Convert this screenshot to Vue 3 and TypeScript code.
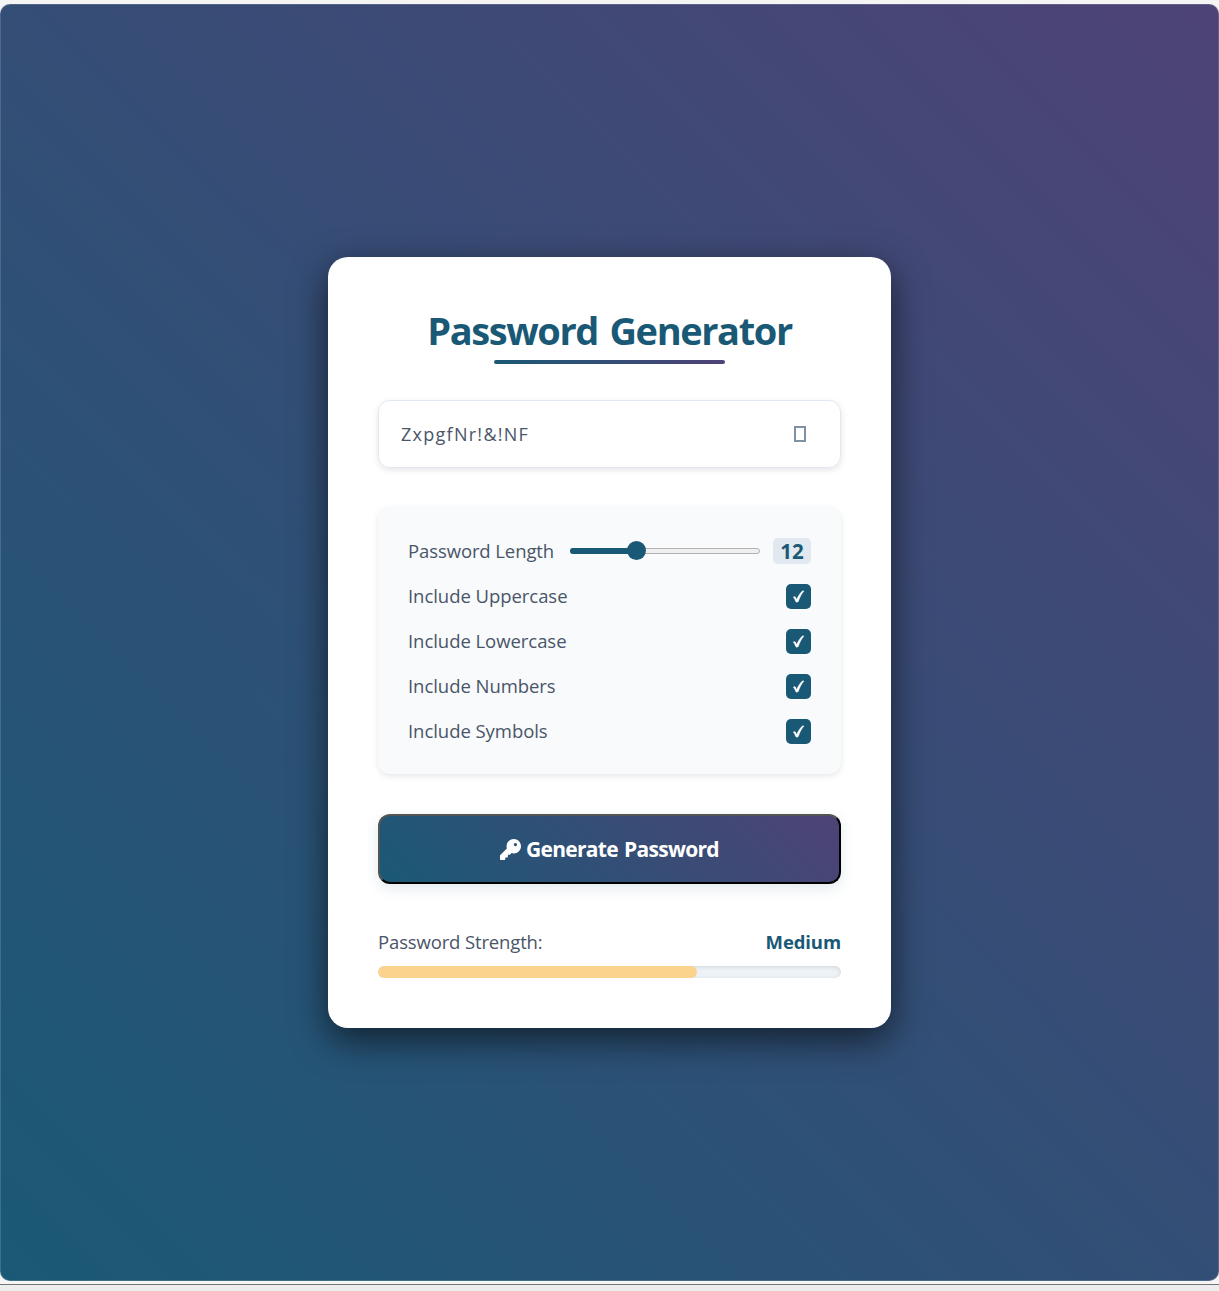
<script setup lang="ts">
import { computed, ref } from 'vue'

interface Option {
  label: string
  checked: boolean
}

const password = ref('ZxpgfNr!&!NF')
const length = ref(12)
const options = ref<Option[]>([
  { label: 'Include Uppercase', checked: true },
  { label: 'Include Lowercase', checked: true },
  { label: 'Include Numbers', checked: true },
  { label: 'Include Symbols', checked: true },
])
const strength = ref({ label: 'Medium', percent: 69 })

const MIN = 4
const MAX = 28
const sliderPercent = computed(() => 1.4 + ((length.value - MIN) / (MAX - MIN)) * 100)
</script>

<template>
  <div class="page">
    <main class="stage">
      <section class="card">
        <h1 class="title"><span>Password Generator</span></h1>
        <div class="rule"></div>

        <div class="output">
          <span class="password">{{ password }}</span>
          <button class="copy" aria-label="Copy password"><i class="tofu"></i></button>
        </div>

        <div class="settings">
          <div class="row">
            <span class="label length-label">Password Length</span>
            <div class="slider" role="slider" :aria-valuenow="length">
              <div class="fill" :style="{ width: sliderPercent + '%' }"></div>
              <div class="thumb" :style="{ left: sliderPercent + '%' }"></div>
            </div>
            <span class="count">{{ length }}</span>
          </div>
          <div v-for="option in options" :key="option.label" class="row">
            <span class="label">{{ option.label }}</span>
            <button class="check" @click="option.checked = !option.checked">
              <svg v-if="option.checked" width="25" height="25" viewBox="0 0 25 25">
                <path
                  d="M7.1 13.2C8.1 12.2 9.4 12.5 9.8 13.6L10.6 15.6C12.1 12 14 9 16.3 7C17 6.7 17.7 6.8 18 7C15.6 9.9 13.8 13.4 12.4 17.4C11.7 18.3 10.4 18.5 9.8 17.7C9 16 8.5 14 7.1 13.2Z"
                  fill="#fff"
                  stroke="#fff"
                  stroke-width="0.3"
                />
              </svg>
            </button>
          </div>
        </div>

        <button class="generate">
          <svg width="21" height="21" viewBox="0 0 512 512">
            <path
              fill="#fff"
              d="M336 352c97.200 0 176-78.800 176-176S433.200 0 336 0S160 78.800 160 176c0 18.700 2.900 36.800 8.300 53.700L7 391c-4.500 4.500-7 10.600-7 17v80c0 13.300 10.700 24 24 24h80c13.300 0 24-10.700 24-24v-40h40c13.300 0 24-10.700 24-24v-40h40c6.400 0 12.500-2.500 17-7l33.300-33.300c16.900 5.400 35 8.300 53.700 8.300zM376 96a40 40 0 1 1 0 80a40 40 0 1 1 0-80z"
            />
          </svg>
          <span>Generate Password</span>
        </button>

        <div class="strength">
          <span class="label strength-label">Password Strength:</span>
          <strong>{{ strength.label }}</strong>
        </div>
        <div class="meter">
          <div class="meter-fill" :style="{ width: strength.percent + '%' }"></div>
        </div>
      </section>
    </main>
    <footer class="edge"></footer>
  </div>
</template>

<style>
body {
  background: #f4f4f4;
}
</style>

<style scoped>
* {
  box-sizing: border-box;
}

.page {
  height: 1291px;
  padding-top: 4px;
  display: flex;
  flex-direction: column;
  background: #f5f5f5;
  font-family: 'Open Sans', 'Noto Sans', sans-serif;
  color: #4a5568;
}

.stage {
  height: 1277px;
  flex: none;
  display: flex;
  justify-content: center;
  align-items: flex-start;
  padding-top: 253px;
  border-radius: 10px;
  background: linear-gradient(45deg, #1a5976, #4e4376);
  box-shadow: inset 0 0 0 1px rgba(255, 255, 255, 0.14);
}

.edge {
  height: 7px;
  margin-top: 3px;
  border-top: 1px solid #757575;
  background: #ededed;
}

.card {
  width: 563px;
  height: 771px;
  padding: 50px;
  display: flex;
  flex-direction: column;
  border-radius: 20px;
  background: #fff;
  box-shadow: 0 12px 36px rgba(0, 0, 0, 0.6);
}

.title {
  margin: 0;
  height: 48px;
  line-height: 47px;
  text-align: center;
  white-space: nowrap;
  font-size: 38px;
  font-weight: 700;
  letter-spacing: -1.4px;
  word-spacing: 3px;
  color: #1a5976;
}

.rule {
  width: 231px;
  height: 4px;
  margin: 5px auto 0;
  border-radius: 2px;
  background: linear-gradient(45deg, #1a5976, #4e4376);
}

.output {
  height: 68px;
  margin-top: 36px;
  padding: 0 34px 0 22px;
  display: flex;
  align-items: center;
  justify-content: space-between;
  border: 1px solid #e2e8f0;
  border-radius: 12px;
  box-shadow: 0 2px 6px rgba(0, 0, 0, 0.11);
}

.password {
  font-size: 18px;
  letter-spacing: 1.27px;
}

button {
  padding: 0;
  border: 0;
  background: none;
  font-family: inherit;
}

.copy {
  display: flex;
}

.tofu {
  width: 12px;
  height: 16px;
  border: 2px solid #8290a6;
}

.settings {
  height: 267px;
  margin-top: 39px;
  padding: 21px 30px;
  border-radius: 12px;
  background: #f8fafc;
  box-shadow: 0 2px 6px rgba(0, 0, 0, 0.1);
}

.row {
  height: 45px;
  display: flex;
  align-items: center;
  justify-content: space-between;
}

.label {
  font-size: 18.5px;
  letter-spacing: -0.05px;
  white-space: nowrap;
}

.length-label {
  width: 146px;
  letter-spacing: -0.1px;
}

.strength-label {
  letter-spacing: -0.14px;
}

.slider {
  position: relative;
  width: 190px;
  height: 6px;
  margin-left: 16px;
  border: 1px solid #b2b2b2;
  border-radius: 3px;
  background: #efefef;
}

.fill {
  height: 6px;
  margin: -1px 0 0 -1px;
  border-radius: 3px;
  background: #1a5976;
}

.thumb {
  position: absolute;
  top: -7.500px;
  width: 19px;
  height: 19px;
  margin-left: -9.5px;
  border-radius: 50%;
  background: #1a5976;
}

.count {
  width: 38px;
  height: 26px;
  margin-left: 13px;
  border-radius: 5px;
  line-height: 27px;
  text-align: center;
  background: #e2e8f0;
  color: #1a5976;
  font-size: 20.5px;
  font-weight: 700;
}

.check {
  width: 25px;
  height: 25px;
  margin-top: 1px;
  border-radius: 5px;
  background: #1a5976;
}

.check svg {
  display: block;
}

.generate {
  height: 70px;
  flex: none;
  margin-top: 40px;
  display: flex;
  align-items: center;
  justify-content: center;
  gap: 5px;
  border: 2px outset #000;
  border-radius: 12px;
  background: linear-gradient(45deg, #1a5976, #4e4376);
  box-shadow: 0 4px 14px rgba(26, 89, 118, 0.13);
  color: #fff;
  font-size: 21px;
  font-weight: 700;
  letter-spacing: -0.72px;
  word-spacing: 1.5px;
  white-space: nowrap;
}

.strength {
  height: 28px;
  margin-top: 43px;
  display: flex;
  align-items: center;
  justify-content: space-between;
}

.strength strong {
  color: #1a5976;
  font-size: 18.5px;
  font-weight: 700;
  letter-spacing: -0.1px;
}

.meter {
  height: 12px;
  margin-top: 11px;
  overflow: hidden;
  border-radius: 6px;
  background: #edf2f7;
  box-shadow: inset 0 1px 4px rgba(0, 0, 0, 0.12);
}

.meter-fill {
  height: 100%;
  border-radius: 6px;
  background: #fbd38d;
}
</style>
